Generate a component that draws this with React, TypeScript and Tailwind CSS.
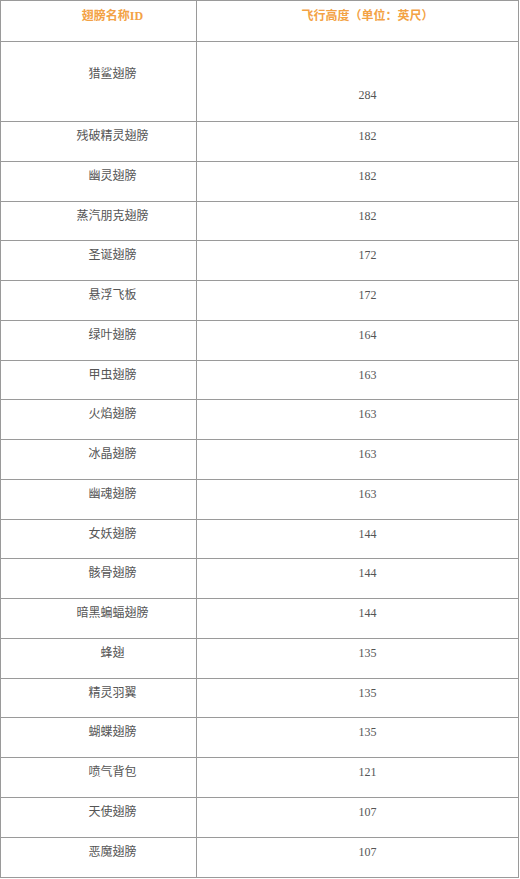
const rows: [string, string][] = [
  ["残破精灵翅膀", "182"],
  ["幽灵翅膀", "182"],
  ["蒸汽朋克翅膀", "182"],
  ["圣诞翅膀", "172"],
  ["悬浮飞板", "172"],
  ["绿叶翅膀", "164"],
  ["甲虫翅膀", "163"],
  ["火焰翅膀", "163"],
  ["冰晶翅膀", "163"],
  ["幽魂翅膀", "163"],
  ["女妖翅膀", "144"],
  ["骸骨翅膀", "144"],
  ["暗黑蝙蝠翅膀", "144"],
  ["蜂翅", "135"],
  ["精灵羽翼", "135"],
  ["蝴蝶翅膀", "135"],
  ["喷气背包", "121"],
  ["天使翅膀", "107"],
  ["恶魔翅膀", "107"],
];

const font = { fontFamily: '"Liberation Serif", "Noto Sans CJK SC", serif' };

export default function App() {
  return (
    <div className="w-[520px] h-[879px] bg-white" style={font}>
      <div className="w-[519px] border border-[#9a9a9a] text-[12px] leading-[20px] text-[#555555]">
        {/* header */}
        <div className="flex h-[40px] border-b border-[#9a9a9a] box-content">
          <div className="w-[196px] shrink-0 border-r border-[#9a9a9a] pl-[28px] pt-[5px] text-center font-bold text-[#f3a245]">
            翅膀名称ID
          </div>
          <div className="flex-1 pl-[20px] pt-[5px] text-center font-bold text-[#f3a245]">
            飞行高度（单位：英尺）
          </div>
        </div>

        {/* first row is double height */}
        <div className="flex h-[79px] border-b border-[#9a9a9a] box-content">
          <div className="w-[196px] shrink-0 border-r border-[#9a9a9a] pl-[28px] pt-[22px] text-center">
            猎鲨翅膀
          </div>
          <div className="flex-1 pl-[20px] pt-[43px] text-center">284</div>
        </div>

        {rows.map(([name, height], i) => (
          <div
            key={i}
            className={`flex box-content ${i < rows.length - 1 ? "h-[38.75px] border-b border-[#9a9a9a]" : "h-[39.75px]"}`}
          >
            <div className="w-[196px] shrink-0 border-r border-[#9a9a9a] pl-[28px] pt-[4px] text-center">
              {name}
            </div>
            <div className="flex-1 pl-[20px] pt-[4px] text-center">{height}</div>
          </div>
        ))}
      </div>
    </div>
  );
}
